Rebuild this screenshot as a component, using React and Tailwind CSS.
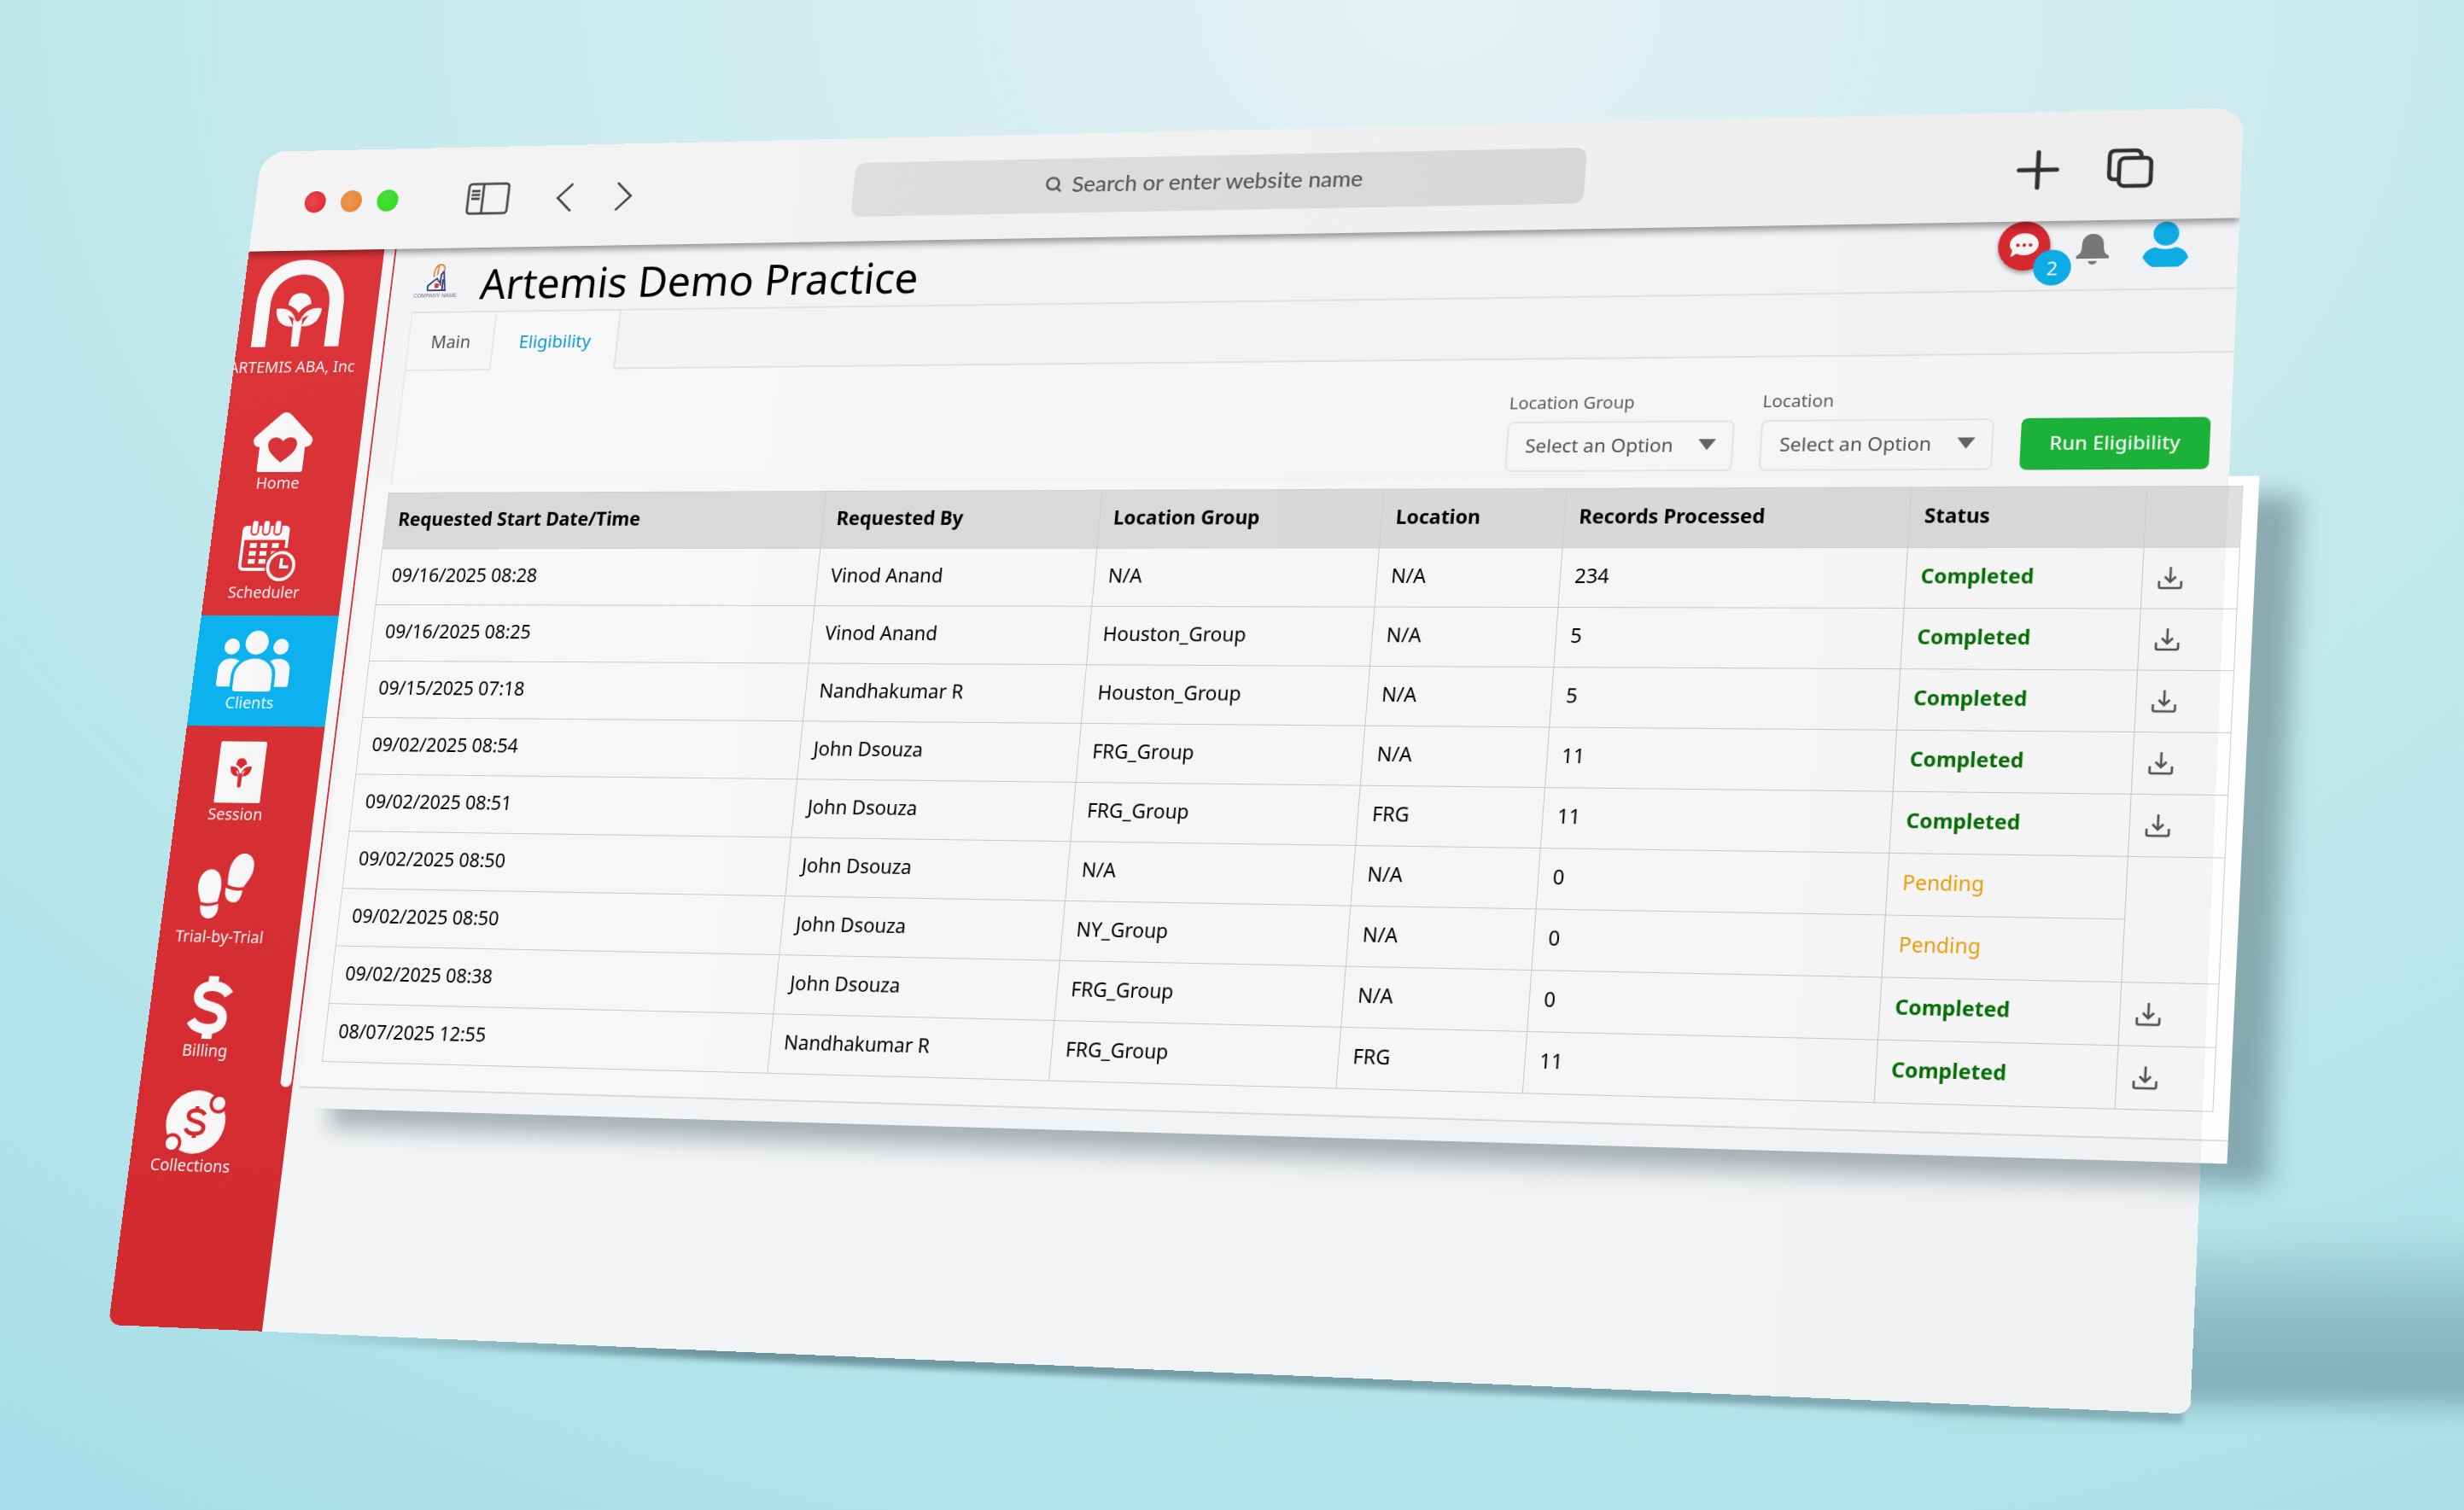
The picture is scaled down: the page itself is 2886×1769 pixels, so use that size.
import { useEffect, useState } from 'react';
import { Search } from 'lucide-react';

const STAGE_WIDTH = 2886;

// corners on the stage: top left, top right, bottom right, bottom left
const WINDOW_QUAD = [[307, 178], [2629, 126], [2566, 1657], [127, 1552]];
const WINDOW_RECT = { x: 0, y: 0, w: 2400, h: 1460 };

const TABLE_QUAD = [[455, 577], [2627, 569], [2592, 1302], [377, 1243]];
const TABLE_RECT = { x: 25, y: 11, w: 2200, h: 700 };

// matrix3d that puts a flat rect onto a tilted quad
const project = (rect, quad, k) => {
  const [[x0, y0], [x1, y1], [x2, y2], [x3, y3]] = quad.map(([x, y]) => [x * k, y * k]);
  const dx1 = x1 - x2, dx2 = x3 - x2, dx3 = x0 - x1 + x2 - x3;
  const dy1 = y1 - y2, dy2 = y3 - y2, dy3 = y0 - y1 + y2 - y3;
  const den = dx1 * dy2 - dx2 * dy1;
  const g = (dx3 * dy2 - dx2 * dy3) / den;
  const h = (dx1 * dy3 - dx3 * dy1) / den;
  const a = (x1 - x0 + g * x1) / rect.w;
  const b = (x3 - x0 + h * x3) / rect.h;
  const d = (y1 - y0 + g * y1) / rect.w;
  const e = (y3 - y0 + h * y3) / rect.h;
  const gw = g / rect.w;
  const hh = h / rect.h;
  const c = x0 - a * rect.x - b * rect.y;
  const f = y0 - d * rect.x - e * rect.y;
  const i = 1 - gw * rect.x - hh * rect.y;
  return `matrix3d(${[a, d, 0, gw, b, e, 0, hh, 0, 0, 1, 0, c, f, 0, i].join(',')})`;
};

const useStageScale = () => {
  const [scale, setScale] = useState(window.innerWidth / STAGE_WIDTH);
  useEffect(() => {
    const onResize = () => setScale(window.innerWidth / STAGE_WIDTH);
    window.addEventListener('resize', onResize);
    return () => window.removeEventListener('resize', onResize);
  }, []);
  return scale;
};

/* ---------- icons ---------- */

const Sprout = () => (
  <>
    <path d="M-16 -17 C-16 -29 -9 -34 0 -34 C9 -34 16 -28 16 -18 C9 -16 4 -12 0 -6 C-4 -11 -9 -15 -16 -17Z" />
    <path d="M-31 -14 C-18 -16 -6 -12 -2 2 L-1 8 C-3 2 -6 0 -11 -2 C-8 2 -6 6 -4 11 C-22 12 -31 2 -31 -14Z" />
    <path d="M31 -14 C18 -16 6 -12 2 2 L1 8 C3 2 6 0 11 -2 C8 2 6 6 4 11 C22 12 31 2 31 -14Z" />
    <path d="M-6 0 L0 4 L6 0 L5 36 H-5Z" stroke="none" />
  </>
);

const ArchLogo = () => (
  <svg width="116" height="112" viewBox="0 0 116 112" fill="#fdfdfd">
    <path d="M0 112 V58 C0 22 26 0 58 0 C90 0 116 22 116 58 V112 H97 V58 C97 33 79 19 58 19 C37 19 19 33 19 58 V112Z" />
    <g transform="translate(58 76)" stroke="#de343a" strokeWidth="2"><Sprout /></g>
  </svg>
);

const HomeIcon = () => (
  <svg width="78" height="76" viewBox="0 0 78 76" fill="#fdfdfd">
    <path d="M39 0 C42 0 44 1 46 3 L76 31 C80 36 77 44 70 44 H69 V73 C69 75 68 76 66 76 H12 C10 76 9 75 9 73 V44 H8 C1 44 -2 36 2 31 L32 3 C34 1 36 0 39 0Z" />
    <path d="M39 64 C30 57 20 50 20 41 C20 31 33 29 39 37 C45 29 58 31 58 41 C58 50 48 57 39 64Z" fill="#de343a" />
  </svg>
);

const SchedulerIcon = () => (
  <svg width="76" height="76" viewBox="0 0 76 76" fill="none" stroke="#fdfdfd">
    <path d="M60 34 V12 C60 9 59 8 56 8 H6 C3 8 2 9 2 12 V56 C2 59 4 61 7 61 H36" strokeWidth="4" />
    <path d="M2 8 H60 V24 H2Z" fill="#fdfdfd" stroke="none" />
    {[16, 31, 46].map((x) => (
      <g key={x}>
        <path d={`M${x} 4 V13`} stroke="#de343a" strokeWidth="11" strokeLinecap="round" />
        <path d={`M${x} 3 V13`} strokeWidth="7" strokeLinecap="round" />
      </g>
    ))}
    {[31, 41, 51].map((y) => (
      <path key={y} d={`M12 ${y} H21 M26 ${y} H35 M41 ${y} H50`} strokeWidth="6" />
    ))}
    <circle cx="56" cy="57" r="21" fill="#de343a" stroke="none" />
    <circle cx="56" cy="57" r="17" strokeWidth="4" />
    <path d="M56 47 V58 H66" strokeWidth="4" />
  </svg>
);

const ClientsIcon = () => (
  <svg width="94" height="76" viewBox="0 0 94 76" fill="#fdfdfd">
    <circle cx="47" cy="15" r="15" />
    <circle cx="15" cy="20" r="10" />
    <circle cx="79" cy="20" r="10" />
    <path d="M22 72 V58 C22 43 34 35 47 35 C60 35 72 43 72 58 V72 C72 75 70 76 68 76 H26 C24 76 22 75 22 72Z" />
    <path d="M18 70 H4 C1 70 0 69 0 67 V50 C0 40 7 35 16 35 C20 35 24 36 27 38 C20 44 18 50 18 58Z" />
    <path d="M76 70 H90 C93 70 94 69 94 67 V50 C94 40 87 35 78 35 C74 35 70 36 67 38 C74 44 76 50 76 58Z" />
  </svg>
);

const SessionIcon = () => (
  <svg width="60" height="76" viewBox="0 0 60 76">
    <rect width="60" height="76" rx="2" fill="#fdfdfd" />
    <g transform="translate(30 38) scale(0.46 0.52)" fill="#d92c31" stroke="#fdfdfd" strokeWidth="2"><Sprout /></g>
  </svg>
);

const StepsIcon = () => (
  <svg width="72" height="80" viewBox="0 0 72 80" fill="#fdfdfd">
    <path d="M14 20 C24 19 30 29 30 41 C30 50 28 55 28 59 C20 62 12 62 6 60 C4 54 0 48 0 40 C0 29 5 21 14 20Z" />
    <path d="M6 64 C13 66 21 65 29 62 C31 72 27 80 18 80 C10 80 6 73 6 64Z" />
    <path d="M55 0 C47 0 40 8 38 20 C37 30 38 34 38 38 C45 42 52 42 59 41 C62 35 68 29 69 20 C71 8 64 0 55 0Z" />
    <path d="M36 42 C43 45 51 46 58 45 C58 54 54 61 47 60 C39 59 35 52 36 42Z" />
  </svg>
);

const BillingIcon = () => (
  <svg width="54" height="76" viewBox="0 0 54 76" fill="none" stroke="#fdfdfd">
    <path d="M49 22 C43 14 36 12 27 12 C16 12 10 17 10 24 C10 41 44 32 44 51 C44 60 37 64 27 64 C17 64 9 61 4 54" strokeWidth="12" />
    <path d="M27 0 V12 M27 64 V76" strokeWidth="13" />
  </svg>
);

const CollectionsIcon = () => (
  <svg width="80" height="76" viewBox="0 0 80 76" fill="#fdfdfd">
    <circle cx="40" cy="38" r="38" />
    <circle cx="67" cy="15" r="10" stroke="#d82b30" strokeWidth="4" />
    <circle cx="13" cy="64" r="10" stroke="#d82b30" strokeWidth="4" />
    <path d="M51 29 C48 25 45 24 40 24 C33 24 30 27 30 30 C30 40 51 35 51 45 C51 50 46 52 40 52 C34 52 30 50 28 46 M40 19 V25 M40 51 V57" fill="none" stroke="#d82b30" strokeWidth="5" />
  </svg>
);

const CompanyLogo = () => (
  <svg width="60" height="48" viewBox="0 0 60 48" fill="none">
    <path d="M19 36 V30 L26 24 L30 21 L34 26 M19 36 H42 L38 12 L35 16 V30 M38 22 V36" stroke="#3b3f7a" strokeWidth="2" />
    <path d="M26 19 C24 9 29 3 33 3 C37 3 39 6 39 11 M31 4 L30 17" stroke="#e98a4b" strokeWidth="2" />
    <rect x="28" y="27" width="5" height="6" fill="#e0394a" />
    <text x="30" y="45" textAnchor="middle" fontSize="7" fill="#6c6f93" fontFamily="Liberation Sans, sans-serif">COMPANY NAME</text>
  </svg>
);

const SidebarToggleIcon = () => (
  <svg width="56" height="42" viewBox="0 0 56 42" fill="none" stroke="#4b4b4b" strokeWidth="3">
    <rect x="2" y="2" width="52" height="38" rx="4" />
    <path d="M21 2 V40" />
    <path d="M6 11 H17 M6 16 H17 M6 21 H17" strokeWidth="3" />
  </svg>
);

const TabsIcon = () => (
  <svg width="52" height="48" viewBox="0 0 52 48" fill="none" stroke="#333" strokeWidth="4.500">
    <path d="M13 37 H9 C5 37 3 35 3 31 V9 C3 5 5 3 9 3 H31 C35 3 38 5 38 9 V11" />
    <rect x="14" y="12" width="35" height="33" rx="6" />
  </svg>
);

const ChatIcon = () => (
  <svg width="34" height="32" viewBox="0 0 34 32" fill="#fff">
    <path d="M17 1 C27 1 33 7 33 14 C33 21 26 27 17 27 C14 27 11 26 9 25 L2 29 L4 21 C2 19 1 17 1 14 C1 7 8 1 17 1Z" />
    <circle cx="10" cy="15" r="2" fill="#d9252b" />
    <circle cx="17" cy="15" r="2" fill="#d9252b" />
    <circle cx="24" cy="15" r="2" fill="#d9252b" />
  </svg>
);

const BellIcon = () => (
  <svg width="38" height="38" viewBox="0 0 38 38" fill="#7c7c7c">
    <path d="M19 2 C27 2 31 8 31 15 C31 22 32 25 37 28 V31 H1 V28 C6 25 7 22 7 15 C7 8 11 2 19 2Z" />
    <path d="M14 34 H24 C23 37 21 38 19 38 C17 38 15 37 14 34Z" />
  </svg>
);

const PersonIcon = () => (
  <svg width="50" height="53" viewBox="0 0 50 53" fill="#0db2ee">
    <ellipse cx="25" cy="14" rx="14" ry="14" />
    <path d="M14 30 C21 33 29 33 36 30 C44 31 48 36 50 42 C47 47 43 51 39 53 H11 C7 51 3 47 0 42 C2 36 6 31 14 30Z" />
  </svg>
);

const DownloadIcon = () => (
  <svg width="28" height="26" viewBox="0 0 28 26" fill="none" stroke="#565656" strokeWidth="2.500">
    <path d="M14 0 V17 M8 11 L14 17 L20 11" />
    <path d="M2 16 V22 C2 24 3 24 4 24 H24 C25 24 26 24 26 22 V16" />
  </svg>
);

/* ---------- browser chrome ---------- */

const Toolbar = () => (
  <div className="relative z-10 grid h-[130px] grid-cols-[776px_1fr_739px] items-center bg-gradient-to-r from-[#fafafa] to-[#f7f7f7] shadow-[0_5px_8px_rgba(0,0,0,0.38)]">
    <div className="flex items-center pt-1 pl-[66px]">
      <div className="flex gap-5">
        <span className="size-7 rounded-full bg-[radial-gradient(circle_at_40%_45%,#f04a50,#e4222b)]" />
        <span className="size-7 rounded-full bg-[radial-gradient(circle_at_40%_45%,#f59a52,#ee8432)]" />
        <span className="size-7 rounded-full bg-[radial-gradient(circle_at_40%_45%,#4ae83a,#2fdb22)]" />
      </div>
      <button aria-label="Toggle sidebar" className="ml-[90px]"><SidebarToggleIcon /></button>
      <button aria-label="Back" className="ml-[60px]">
        <svg width="24" height="38" viewBox="0 0 24 38" fill="none" stroke="#4b4b4b" strokeWidth="3"><path d="M21 2 L3 20 L21 37" /></svg>
      </button>
      <button aria-label="Forward" className="ml-[52px]">
        <svg width="24" height="38" viewBox="0 0 24 38" fill="none" stroke="#4b4b4b" strokeWidth="3"><path d="M3 2 L21 19 L3 37" /></svg>
      </button>
    </div>
    <label className="flex h-[68px] items-center justify-center gap-3 rounded-[12px] bg-gradient-to-r from-[#e6e6e6] to-[#dfdfdf] pr-6 pb-1 text-[#5c5c5c]">
      <Search size={22} strokeWidth={3} />
      <input
        aria-label="Address"
        placeholder="Search or enter website name"
        className="w-[352px] bg-transparent font-[Lato,sans-serif] text-[27px] font-medium outline-none placeholder:text-[#5c5c5c] placeholder:opacity-100"
      />
    </label>
    <div className="flex items-center justify-end gap-[52px] pt-2 pr-[96px]">
      <button aria-label="New tab">
        <svg width="48" height="48" viewBox="0 0 48 48" stroke="#333" strokeWidth="5" strokeLinecap="round"><path d="M24 3 V45 M3 24 H45" /></svg>
      </button>
      <button aria-label="Show tabs"><TabsIcon /></button>
    </div>
  </div>
);

/* ---------- app ---------- */

const NAV_ITEMS = [
  { label: 'Home', Icon: HomeIcon },
  { label: 'Scheduler', Icon: SchedulerIcon },
  { label: 'Clients', Icon: ClientsIcon, active: true },
  { label: 'Session', Icon: SessionIcon },
  { label: 'Trial-by-Trial', Icon: StepsIcon, tall: true },
  { label: 'Billing', Icon: BillingIcon },
  { label: 'Collections', Icon: CollectionsIcon },
];

const Sidebar = () => (
  <aside className="flex w-[196px] shrink-0 items-start bg-gradient-to-b from-[#e2353a] to-[#d72b30] text-xl leading-7 text-white">
    <nav className="flex w-[180px] flex-col">
      <div className="flex h-[189px] w-[154px] flex-col items-center gap-3 pt-3">
        <ArchLogo />
        <span className="whitespace-nowrap">ARTEMIS ABA, Inc</span>
      </div>
      {NAV_ITEMS.map(({ label, Icon, active, tall }) => (
        <a key={label} href="#" className={`flex flex-col pt-[19px] ${tall ? 'h-[150px]' : 'h-[138px]'} ${active ? 'bg-[#0cb6f4]' : ''}`}>
          <span className={`flex w-[156px] flex-col items-center ${tall ? 'gap-2' : ''}`}>
            <Icon />
            <span>{label}</span>
          </span>
        </a>
      ))}
    </nav>
    <div className="h-[1041px] w-3.5 rounded-b-full bg-[#fdfdfe]" />
  </aside>
);

const Header = () => (
  <header className="flex h-[81px] items-start bg-[#fafbfd] pr-[54px] pl-7">
    <div className="pt-[18px]"><CompanyLogo /></div>
    <h1 className="ml-7 pt-4 text-[52px] leading-[60px] text-black">Artemis Demo Practice</h1>
    <div className="ml-auto flex items-center">
      <button aria-label="Messages, 2 unread" className="relative flex size-[58px] items-center justify-center rounded-full bg-[#dd2a30] shadow-[0_3px_5px_rgba(0,0,0,0.35)]">
        <ChatIcon />
        <span className="absolute top-[34px] left-10 flex size-[42px] items-center justify-center rounded-full bg-[#0db2ee] text-[22px] text-white">2</span>
      </button>
      <button aria-label="Notifications" className="ml-7 pt-2"><BellIcon /></button>
      <button aria-label="Account" className="ml-9"><PersonIcon /></button>
    </div>
  </header>
);

const Filter = ({ id, label }) => (
  <div className="flex w-[260px] flex-col gap-2">
    <label htmlFor={id} className="text-xl leading-7 text-[#606060]">{label}</label>
    <div className="relative">
      <select id={id} className="h-[60px] w-full appearance-none rounded-lg border-2 border-[#ededed] bg-[#fefefe] pb-1 pl-5 text-[22px] text-[#555]">
        <option>Select an Option</option>
      </select>
      <span className="pointer-events-none absolute top-[22px] right-5 border-x-[10px] border-t-[13px] border-x-transparent border-t-[#666]" />
    </div>
  </div>
);

const BrowserWindow = ({ transform }) => (
  <div className="absolute top-0 left-0 flex h-[1460px] w-[2400px] origin-top-left flex-col overflow-hidden rounded-t-[32px] rounded-b-[14px] bg-white" style={{ transform }}>
    <Toolbar />
    <div className="flex flex-1">
      <Sidebar />
      <main className="flex flex-1 flex-col bg-[#fafbfc]">
        <Header />
        <div className="ml-[30px] h-[960px] border-b-2 border-l-2 border-[#f0f0f0] bg-[#fefefe]">
          <div className="flex h-[76px] border-t-2 border-[#e9e9e9] text-[22px]">
            <button className="w-[110px] border-r-2 border-b-2 border-[#ececec] bg-[#fcfcfb] text-[#555]">Main</button>
            <button className="w-[158px] text-[#0b9fd6]">Eligibility</button>
            <div className="flex-1 border-b-2 border-l-2 border-[#e9e9e9] bg-[#fbfbfb]" />
          </div>
          <div className="flex items-end justify-end gap-[30px] pt-[38px] pr-[22px]">
            <Filter id="location-group" label="Location Group" />
            <Filter id="location" label="Location" />
            <button className="h-[60px] w-[206px] rounded-lg bg-[#1db83b] pb-1 text-[22px] font-medium text-white">Run Eligibility</button>
          </div>
        </div>
      </main>
    </div>
  </div>
);

const ROWS = [
  ['09/16/2025 08:28', 'Vinod Anand', 'N/A', 'N/A', '234', 'Completed'],
  ['09/16/2025 08:25', 'Vinod Anand', 'Houston_Group', 'N/A', '5', 'Completed'],
  ['09/15/2025 07:18', 'Nandhakumar R', 'Houston_Group', 'N/A', '5', 'Completed'],
  ['09/02/2025 08:54', 'John Dsouza', 'FRG_Group', 'N/A', '11', 'Completed'],
  ['09/02/2025 08:51', 'John Dsouza', 'FRG_Group', 'FRG', '11', 'Completed'],
  ['09/02/2025 08:50', 'John Dsouza', 'N/A', 'N/A', '0', 'Pending'],
  ['09/02/2025 08:50', 'John Dsouza', 'NY_Group', 'N/A', '0', 'Pending'],
  ['09/02/2025 08:38', 'John Dsouza', 'FRG_Group', 'N/A', '0', 'Completed'],
  ['08/07/2025 12:55', 'Nandhakumar R', 'FRG_Group', 'FRG', '11', 'Completed'],
];

const COLUMNS = ['Requested Start Date/Time', 'Requested By', 'Location Group', 'Location', 'Records Processed', 'Status'];

const ActionCell = ({ index, status }) => {
  if (status === 'Completed') {
    return (
      <td className="border border-[#d0d0d0] pl-4">
        <button aria-label="Download report" className="block"><DownloadIcon /></button>
      </td>
    );
  }
  // consecutive pending rows share one empty cell
  if (ROWS[index - 1][5] === 'Pending') return null;
  return <td rowSpan={2} className="border border-[#d0d0d0]" />;
};

const ResultsPanel = ({ transform }) => (
  <section className="absolute top-0 left-0 w-[2243px] origin-top-left bg-[#fefefe] pt-[11px] shadow-[44px_22px_26px_rgba(65,85,95,0.42)]" style={{ transform }}>
    <div className="border-b-2 border-[#e0e0e0] pr-[18px] pb-[30px] pl-[25px]">
      <table className="h-[700px] w-full table-fixed border-collapse text-left text-[23px] text-black">
        <colgroup>
          <col className="w-[557px]" />
          <col className="w-[339px]" />
          <col className="w-[336px]" />
          <col className="w-[213px]" />
          <col className="w-[391px]" />
          <col className="w-[260px]" />
          <col className="w-[104px]" />
        </colgroup>
        <thead>
          <tr className="h-[70px] bg-[#e0e0e0]">
            {COLUMNS.map((name) => (
              <th key={name} className="border border-[#d6d6d6] pb-1 pl-4 font-bold">{name}</th>
            ))}
            <th aria-label="Download" className="border border-[#d6d6d6]" />
          </tr>
        </thead>
        <tbody>
          {ROWS.map((row, index) => (
            <tr key={index} className="h-[70px]">
              {row.slice(0, 5).map((value, i) => (
                <td key={i} className="border border-[#d0d0d0] pb-1 pl-4">{value}</td>
              ))}
              <td className={`border border-[#d0d0d0] pb-1 pl-4 ${row[5] === 'Completed' ? 'font-bold text-[#067206]' : 'text-[#f0a30a]'}`}>{row[5]}</td>
              <ActionCell index={index} status={row[5]} />
            </tr>
          ))}
        </tbody>
      </table>
    </div>
    <div className="h-6 bg-[#fafbfd]" />
  </section>
);

export default function App() {
  const scale = useStageScale();
  const windowTransform = project(WINDOW_RECT, WINDOW_QUAD, scale);
  const panelTransform = project(TABLE_RECT, TABLE_QUAD, scale);

  return (
    <div className="relative h-screen w-full overflow-hidden bg-[radial-gradient(ellipse_85%_105%_at_58%_0%,#e4f2f2_0%,#d2edf0_30%,#c0e8ec_62%,#b1e3ea_95%,#9fd9e6_125%)] font-['Noto_Sans',sans-serif]">
      {/* floor shadow behind the window */}
      <div className="absolute top-[81%] left-[78%] h-[12%] w-[26%] bg-gradient-to-b from-[#78a5af]/0 via-[#78a5af]/60 to-[#78a5af]/90 blur-[16px]" />
      {/* contact shadow under the bottom edge */}
      <div className="absolute top-0 left-0 flex h-[1470px] w-[2400px] origin-top-left items-end pr-2 pl-[210px]" style={{ transform: windowTransform }}>
        <div className="h-16 w-full bg-gradient-to-r from-[#658990]/0 via-[#6b949d] via-25% to-[#84b0b8] blur-[3px]" />
      </div>
      <BrowserWindow transform={windowTransform} />
      <ResultsPanel transform={panelTransform} />
      {/* light falloff across the glass */}
      <div
        className="pointer-events-none absolute top-0 left-0 h-[1460px] w-[2400px] origin-top-left rounded-t-[32px] rounded-b-[14px] bg-gradient-to-r from-black/[0.025] to-black/[0.04]"
        style={{ transform: windowTransform }}
      />
    </div>
  );
}
